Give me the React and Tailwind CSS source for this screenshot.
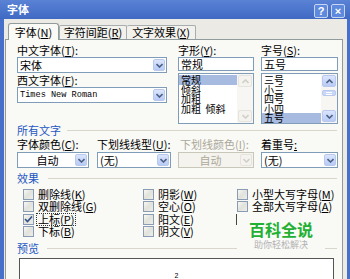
import clsx from "clsx";

const K = ({ c }) => (
  <>
    (<span className="underline">{c}</span>)
  </>
);

const Chevron = ({ down = true, color = "#4d6185" }) => (
  <svg width="7" height="5" viewBox="0 0 7 5" fill="none">
    <path
      d={down ? "M0.5 1 L3.5 4 L6.5 1" : "M0.5 4 L3.5 1 L6.5 4"}
      stroke={color}
      strokeWidth="1.6"
    />
  </svg>
);

const ArrowBtn = ({ down = true, disabled, className }) => (
  <div
    className={clsx(
      "flex items-center justify-center rounded-[2px] border",
      disabled
        ? "border-[#e4e3dc] bg-[#f4f3ef]"
        : "border-[#b9c9ee] bg-gradient-to-b from-[#dbe5fd] to-[#b8cbf5]",
      className
    )}
  >
    <Chevron down={down} color={disabled ? "#d2d0c6" : "#4d6185"} />
  </div>
);

function Combo({ children, disabled, center, mono, className }) {
  return (
    <div
      className={clsx(
        "flex border",
        disabled ? "border-[#c9c7ba] bg-[#f4f3ee] text-[#aca899]" : "border-[#7f9db9] bg-white text-black",
        className
      )}
    >
      <div
        className={clsx(
          "flex-1 flex items-center leading-none",
          center ? "justify-center pl-[2px]" : "pl-[2px]",
          mono ? "font-['Liberation_Mono',monospace] text-[8.6px]" : "text-[11px]"
        )}
      >
        {children}
      </div>
      <ArrowBtn disabled={disabled} className="w-[12px] my-px mr-px" />
    </div>
  );
}

const Label = ({ children, className }) => (
  <div className={clsx("h-[12px] text-[11px] leading-[12px] whitespace-nowrap", className)}>{children}</div>
);

function Header({ children, lineClass }) {
  return (
    <div className="flex items-center h-[12px]">
      <span className="text-[11px] leading-[12px] text-[#2457c2] whitespace-nowrap">{children}</span>
      <div className={clsx("h-0 border-t border-[#d9d7cc]", lineClass)} />
    </div>
  );
}

function Check({ label, k, checked, focus }) {
  return (
    <div className="flex items-center h-[12.5px]">
      <span className="w-[11px] h-[11px] shrink-0 border border-[#8a9bb5] bg-gradient-to-br from-[#f8f8f5] via-[#e2e2dc] to-[#eeeeea] flex items-center justify-center">
        {checked && (
          <svg width="9" height="8" viewBox="0 0 9 8" fill="none">
            <path d="M1 4 L3.5 6.5 L8 1.5" stroke="#2f4f86" strokeWidth="1.6" />
          </svg>
        )}
      </span>
      <span
        className={clsx(
          "ml-[3px] px-px text-[11px] leading-[11px] whitespace-nowrap",
          focus && "outline outline-1 outline-dotted outline-[#333]"
        )}
      >
        {label}
        <K c={k} />
      </span>
    </div>
  );
}

function ListBox({ items, selected, scroll }) {
  return (
    <div className="mt-[2px] h-[51px] flex border border-[#7f9db9] bg-white overflow-hidden">
      <div className="flex-1 pt-px">
        {items.map((t) => (
          <div
            key={t}
            className={clsx(
              "h-[9.6px] text-[10px] leading-[9.6px] pl-[2px] whitespace-pre",
              t === selected && "bg-[#a7badf]"
            )}
          >
            {t}
          </div>
        ))}
      </div>
      <div className="w-[16px] flex flex-col bg-[#f7f6f2]">
        <ArrowBtn down={false} disabled={!scroll} className="h-[12px] m-px mb-0" />
        <div className="flex-1 relative">
          {scroll && (
            <div className="absolute left-px right-px top-[3px] h-[6px] rounded-[2px] border border-[#b9c9ee] bg-[#c9d7f8] flex flex-col items-center justify-center gap-px">
              <div className="w-[6px] h-px bg-white" />
              <div className="w-[6px] h-px bg-white" />
            </div>
          )}
        </div>
        <ArrowBtn disabled={!scroll} className="h-[12px] m-px mt-0" />
      </div>
    </div>
  );
}

const TitleBtn = ({ children }) => (
  <div className="w-[14px] h-[14px] rounded-[2px] border border-[#c6d5f2] bg-[#5e89dc] flex items-center justify-center text-white font-bold text-[11px] leading-none font-['Liberation_Sans',sans-serif]">
    {children}
  </div>
);

export default function App() {
  return (
    <div className="w-[350px] h-[279px] overflow-hidden bg-[#4670c9] flex flex-col font-['Noto_Sans_CJK_SC',sans-serif] text-black">
      <div className="h-[19px] shrink-0 flex items-center pl-[7px] pr-[5px] bg-gradient-to-b from-[#5a82d5] to-[#4069c4]">
        <span className="text-white font-bold text-[11px] leading-none">字体</span>
        <div className="ml-auto mt-[3px] flex gap-[3px]">
          <TitleBtn>?</TitleBtn>
          <TitleBtn>×</TitleBtn>
        </div>
      </div>

      <div className="flex-1 ml-[4px] mr-[3px] bg-[#ebeae4] flex flex-col pt-[4px]">
        <div className="h-[16px] flex items-end pl-[4px] shrink-0">
          <div className="relative z-10 -mb-px w-[51px] h-[17px] border border-b-0 border-[#919b9c] rounded-t-[3px] bg-[#f9f9f6] flex items-center justify-center text-[11px] leading-none">
            字体<K c="N" />
          </div>
          <div className="w-[68px] h-[14px] border border-b-0 border-[#a6aeb0] rounded-t-[2px] bg-[#f2f1ec] flex items-center justify-center text-[11px] leading-none">
            字符间距<K c="R" />
          </div>
          <div className="w-[69px] h-[14px] border border-b-0 border-l-0 border-[#a6aeb0] rounded-t-[2px] bg-[#f2f1ec] flex items-center justify-center text-[11px] leading-none">
            文字效果<K c="X" />
          </div>
        </div>

        <div className="relative flex-1 ml-[1px] mr-[4px] border border-[#919b9c] bg-[#f9f9f6] pl-[11px] pr-[4px] pt-[4px] flex flex-col">
          <div className="flex">
            <div className="w-[150px] flex flex-col">
              <Label>中文字体<K c="T" />:</Label>
              <Combo className="mt-px h-[16px]">宋体</Combo>
              <Label className="mt-px">西文字体<K c="F" />:</Label>
              <Combo mono className="mt-px h-[16px]">Times New Roman</Combo>
            </div>
            <div className="ml-[11px] w-[76px] flex flex-col">
              <Label>字形<K c="Y" />:</Label>
              <div className="mt-px h-[14px] border border-[#7f9db9] bg-white pl-[2px] text-[11px] leading-[12px]">常规</div>
              <ListBox items={["常规", "倾斜", "加粗", "加粗  倾斜"]} selected="常规" />
            </div>
            <div className="ml-[7px] w-[77px] flex flex-col">
              <Label>字号<K c="S" />:</Label>
              <div className="mt-px h-[14px] border border-[#7f9db9] bg-white pl-[2px] text-[11px] leading-[12px]">五号</div>
              <ListBox items={["三号", "小三", "四号", "小四", "五号"]} selected="五号" scroll />
            </div>
          </div>

          <Header lineClass="ml-[6px] w-[270px]">所有文字</Header>

          <div className="flex mt-[2px]">
            <div className="w-[72px] flex flex-col">
              <Label>字体颜色<K c="C" />:</Label>
              <Combo center className="mt-[2px] h-[16px]">自动</Combo>
            </div>
            <div className="ml-[8px] w-[74px] flex flex-col">
              <Label>下划线线型<K c="U" />:</Label>
              <Combo className="mt-[2px] h-[16px]">(无)</Combo>
            </div>
            <div className="ml-[7px] w-[76px] flex flex-col">
              <Label className="pl-[2px] text-[#aca899]">下划线颜色<K c="I" />:</Label>
              <Combo center disabled className="mt-[2px] h-[16px]">自动</Combo>
            </div>
            <div className="ml-[7px] w-[77px] flex flex-col">
              <Label>着重号<span className="underline">:</span></Label>
              <Combo className="mt-[2px] h-[16px]">(无)</Combo>
            </div>
          </div>

          <div className="mt-[4px]">
            <Header lineClass="ml-[9px] w-[289px]">效果</Header>
          </div>

          <div className="flex mt-[4px] pl-[6px]">
            <div className="w-[120px] flex flex-col">
              <Check label="删除线" k="K" />
              <Check label="双删除线" k="G" />
              <Check label="上标" k="P" checked focus />
              <Check label="下标" k="B" />
            </div>
            <div className="w-[94px] flex flex-col">
              <Check label="阴影" k="W" />
              <Check label="空心" k="O" />
              <Check label="阳文" k="E" />
              <Check label="阴文" k="V" />
            </div>
            <div className="flex flex-col">
              <Check label="小型大写字母" k="M" />
              <Check label="全部大写字母" k="A" />
              <div className="mt-[1px] -ml-px w-px h-[11px] bg-[#444]" />
            </div>
          </div>

          <div className="mt-[4px]">
            <Header lineClass="ml-[8px] w-[290px]">预览</Header>
          </div>

          <div className="mt-[4px] ml-[2px] w-[315px] h-[40px] border border-[#555] bg-white pt-[13px] text-center text-[7px] leading-[7px] font-['Liberation_Sans',sans-serif]">
            2
          </div>

          <div className="absolute left-[231px] top-[180px] w-[88px] h-[33px] bg-[#f9f9f6] flex flex-col items-center">
            <div className="mt-[1px] text-[16px] leading-[16px] font-bold text-[#22b032]">百科全说</div>
            <div className="mt-[3px] text-[9px] leading-[10px] text-[#b2b2b2]">助你轻松解决</div>
          </div>
        </div>
      </div>
    </div>
  );
}
